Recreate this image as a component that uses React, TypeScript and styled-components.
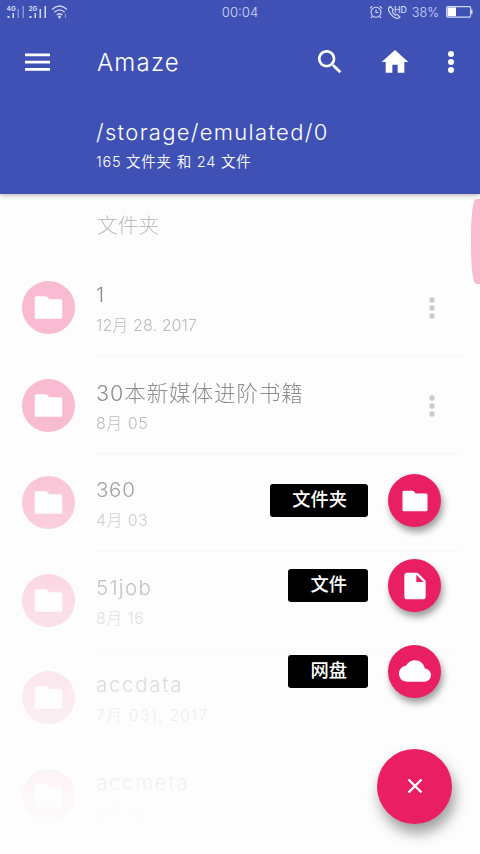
import React from "react";
import styled, { createGlobalStyle, css } from "styled-components";

const Global = createGlobalStyle`
  * { box-sizing: border-box; }
  body { margin: 0; background: #fdfdfd; }
  svg { display: block; flex: none; }
`;

const Screen = styled.div`
  position: relative;
  width: 480px;
  height: 854px;
  overflow: hidden;
  display: flex;
  flex-direction: column;
  background: #fdfdfd;
  font-family: Inter, "Noto Sans CJK SC", sans-serif;
  font-weight: 300;
`;

const Header = styled.header`
  flex: none;
  height: 194px;
  background: #3f51b5;
  color: #fff;
  box-shadow: 0 1px 5px rgba(80, 50, 50, 0.4);
  z-index: 1;
`;

const StatusBar = styled.div`
  display: grid;
  grid-template-columns: 1fr auto 1fr;
  align-items: center;
  height: 24px;
  padding: 0 7px;
  color: #d3d9f5;
`;

const StatusGroup = styled.div<{ $end?: boolean }>`
  display: flex;
  align-items: center;
  justify-content: ${(p) => (p.$end ? "flex-end" : "flex-start")};
`;

type TextProps = { $size: number; $track?: number };
const textStyle = css<TextProps>`
  font-size: ${(p) => p.$size}px;
  letter-spacing: ${(p) => p.$track ?? 0}px;
  white-space: pre;
`;

const Label = styled.span<TextProps>`
  ${textStyle}
`;

const Toolbar = styled.div`
  display: flex;
  align-items: center;
  height: 76px;
  padding: 0 25px;
`;

const AppTitle = styled.h1<TextProps>`
  ${textStyle}
  flex: 1;
  margin: 0 0 0 47px;
  font-weight: 300;
`;

const Actions = styled.div`
  display: flex;
  align-items: center;
`;

const PathBlock = styled.div`
  padding: 17px 0 0 96px;
`;

const PathLine = styled.div<TextProps>`
  ${textStyle}
  line-height: 30px;
`;

const CountLine = styled.div<TextProps>`
  ${textStyle}
  font-weight: 350;
  line-height: 30px;
`;

const Content = styled.main`
  position: relative;
  flex: 1;
  display: flex;
  justify-content: space-between;
  overflow: hidden;
`;

const List = styled.div`
  flex: none;
  width: 461px;
  height: 660px;
  overflow: hidden;
  mask-image: linear-gradient(#000 34%, rgba(0, 0, 0, 0.78) 47%, rgba(0, 0, 0, 0.5) 61%, rgba(0, 0, 0, 0.27) 76%, rgba(0, 0, 0, 0.09) 91%, transparent 97%);
`;

const Section = styled.div<TextProps>`
  ${textStyle}
  height: 65px;
  padding-left: 97px;
  line-height: 64px;
  color: #bdbdbd;
`;

const Row = styled.div`
  display: flex;
  height: 97.5px;
  padding-left: 21.5px;
`;

const Avatar = styled.div`
  display: flex;
  align-items: center;
  justify-content: center;
  flex: none;
  width: 53px;
  height: 53px;
  margin: 22px 21.5px 0 0;
  border-radius: 50%;
  background: #f8bbd1;
`;

const RowBody = styled.div`
  display: flex;
  flex: 1;
  justify-content: space-between;
  border-bottom: 1px solid #f5f5f5;
`;

const RowText = styled.div`
  padding: 21px 0 0 0;
`;

const Name = styled.div<TextProps>`
  ${textStyle}
  line-height: 30px;
  color: #8c8c8c;
`;

const DateLine = styled.div<TextProps>`
  ${textStyle}
  line-height: 30px;
  color: #bcbcbc;
`;

const RowMenu = styled.div`
  padding: 37px 25px 0 0;
`;

const ScrollThumb = styled.div`
  width: 9.5px;
  height: 85px;
  margin-top: 5px;
  border-radius: 5px 0 0 5px / 36px 0 0 36px;
  background: #f8bbd1;
`;

const SpeedDial = styled.div`
  position: absolute;
  right: 28px;
  bottom: 30.5px;
  display: flex;
  flex-direction: column;
  align-items: flex-end;
`;

const DialItem = styled.div`
  display: flex;
  align-items: center;
  height: 53px;
  margin: 0 11px 32.3px 0;
`;

const DialLabel = styled.div`
  height: 33px;
  margin-right: 20px;
  padding: 0 21px 0 22.5px;
  border-radius: 3px;
  background: #000;
  color: #fff;
  font-size: 18.3px;
  font-weight: 500;
  line-height: 31px;
`;

const Fab = styled.button<{ $large?: boolean }>`
  display: flex;
  align-items: center;
  justify-content: center;
  flex: none;
  width: ${(p) => (p.$large ? 75 : 53)}px;
  height: ${(p) => (p.$large ? 75 : 53)}px;
  margin-top: ${(p) => (p.$large ? 18.5 : 0)}px;
  padding: 0;
  border: 0;
  border-radius: 50%;
  background: #e91e63;
  box-shadow: ${(p) =>
    p.$large ? "3px 9px 14px rgba(0, 0, 0, 0.38)" : "2px 5px 7px rgba(0, 0, 0, 0.38)"};
`;

const FolderIcon = ({ size }: { size: number }) => (
  <svg width={size} height={size} viewBox="0 0 24 24" fill="#fff">
    <path d="M9.500 3.800H3.200c-.7 0-1.200.5-1.200 1.200v14c0 .7.5 1.200 1.200 1.200h17.600c.7 0 1.200-.5 1.200-1.200V7.200c0-.7-.5-1.200-1.200-1.200H12.500l-1.200-1.500c-.4-.5-1-.7-1.800-.7z" />
  </svg>
);

const FileIcon = () => (
  <svg width="32" height="32" viewBox="0 0 24 24" fill="#fff">
    <path d="M6 2c-1.100 0-2 .9-2 2v16c0 1.100.9 2 2 2h12c1.100 0 2-.9 2-2V8l-6-6H6zm7 7V3.500L18.500 9H13z" />
  </svg>
);

const CloudIcon = () => (
  <svg width="32" height="32" viewBox="0 0 24 24" fill="#fff">
    <path d="M19.350 10.040C18.670 6.590 15.640 4 12 4 9.110 4 6.600 5.640 5.350 8.040 2.340 8.360 0 10.910 0 14c0 3.310 2.690 6 6 6h13c2.760 0 5-2.240 5-5 0-2.640-2.050-4.780-4.650-4.960z" />
  </svg>
);

const Dots = ({ color, r }: { color: string; r: number }) => (
  <svg width="8" height="24" viewBox="0 0 8 24" fill={color}>
    <circle cx="4" cy="4" r={r} />
    <circle cx="4" cy="12" r={r} />
    <circle cx="4" cy="20" r={r} />
  </svg>
);

const Signal = ({ label, dim }: { label: string; dim?: boolean }) => (
  <svg width="22" height="18" viewBox="0 0 22 18" fill="#d3d9f5">
    <text x="-0.500" y="7.500" fontSize="6.500" fontWeight="700" fontFamily="Inter, sans-serif">{label}</text>
    <rect x="0.500" y="13" width="2" height="2" />
    <rect x="5.500" y="10" width="1.500" height="5" />
    <rect x="10.500" y="6" width="1.500" height="9" opacity={dim ? 0.5 : 1} />
    <rect x="15.500" y="3" width="1.500" height="12" opacity={dim ? 0.5 : 1} />
  </svg>
);

const WifiIcon = () => (
  <svg width="18" height="16" viewBox="0 0 18 16" fill="none" stroke="#d3d9f5" strokeWidth="1.300">
    <path d="M1 5.500Q8.500-1.500 16 5.500M3.300 8.300Q8.500 3.500 13.700 8.300M5.700 11Q8.500 8.500 11.300 11" />
    <circle cx="8.500" cy="13" r="1.400" fill="#d3d9f5" stroke="none" />
    <path d="M14.500 10v4" opacity=".5" />
  </svg>
);

const AlarmIcon = () => (
  <svg width="14" height="14" viewBox="0 0 14 14" fill="none" stroke="#d3d9f5" strokeWidth="1.100">
    <circle cx="7" cy="7.300" r="5" />
    <path d="M7 4.500v3h2.500M1 3.300L3.300 1.200M13 3.300L10.700 1.200M3.300 11.300L2 13M10.700 11.300L12 13" />
  </svg>
);

const CallIcon = () => (
  <svg width="20" height="16" viewBox="0 0 20 16" fill="none" stroke="#d3d9f5" strokeWidth="1.100">
    <path d="M3.500 2.500L1.500 4C1 8 6 14.500 11 14.500L13 13 10 10.200 8.500 11.200C7 10.500 5.500 8.500 5.200 7.200L6.300 5.800 3.500 2.500z" />
    <text x="7" y="8.500" fill="#d3d9f5" stroke="none" fontSize="8.800" fontWeight="500" fontFamily="Inter, sans-serif">HD</text>
  </svg>
);

const BatteryIcon = () => (
  <svg width="27" height="12" viewBox="0 0 27 12">
    <rect x="0.600" y="0.600" width="24" height="10.500" rx="1" fill="none" stroke="#d3d9f5" strokeWidth="1.100" />
    <rect x="1.500" y="1.500" width="8.500" height="8.700" fill="#fff" />
    <rect x="25" y="3.500" width="1.500" height="4.500" fill="#d3d9f5" />
  </svg>
);

const StatusIcon = styled.span<{ $gap: number }>`
  display: flex;
  margin-right: ${(p) => p.$gap}px;
`;

const Action = styled.span<{ $gap: number }>`
  display: flex;
  margin-left: ${(p) => p.$gap}px;
`;

type Entry = { name: string; date: string; size?: number; nameTrack: number; dateTrack: number; menu?: boolean };
const entries: Entry[] = [
  { name: "1", date: "12月 28. 2017", nameTrack: 0, dateTrack: 0.1, menu: true },
  { name: "30本新媒体进阶书籍", date: "8月 05", size: 21.5, nameTrack: 0.95, dateTrack: 0.5, menu: true },
  { name: "360", date: "4月 03", nameTrack: 0.7, dateTrack: 0.4 },
  { name: "51job", date: "8月 16", nameTrack: 1.3, dateTrack: 0.4 },
  { name: "accdata", date: "7月 031, 2017", nameTrack: 1.7, dateTrack: 1.1 },
  { name: "accmeta", date: "8月 16", nameTrack: 1.7, dateTrack: 0.4 },
];

export default function App() {
  return (
    <>
      <Global />
      <Screen>
        <Header>
          <StatusBar>
            <StatusGroup>
              <Signal label="4G" dim />
              <Signal label="2G" />
              <WifiIcon />
            </StatusGroup>
            <Label $size={13.2}>00:04</Label>
            <StatusGroup $end>
              <StatusIcon $gap={4}><AlarmIcon /></StatusIcon>
              <StatusIcon $gap={5}><CallIcon /></StatusIcon>
              <StatusIcon $gap={7}><Label $size={12.6}>38%</Label></StatusIcon>
              <BatteryIcon />
            </StatusGroup>
          </StatusBar>
          <Toolbar>
            <svg width="25" height="20" viewBox="0 0 25 20" fill="#fff">
              <path d="M0 1.500h25v2.700H0zM0 8.700h25v2.700H0zM0 16h25v2.700H0z" />
            </svg>
            <AppTitle $size={24} $track={1.2}>Amaze</AppTitle>
            <Actions>
              <svg width="32" height="32" viewBox="0 0 24 24" fill="#fff">
                <path d="M15.500 14h-.79l-.28-.27C15.410 12.590 16 11.110 16 9.500 16 5.910 13.090 3 9.500 3S3 5.910 3 9.500 5.910 16 9.500 16c1.610 0 3.090-.59 4.230-1.570l.27.28v.79l5 4.990L20.490 19l-4.990-5zm-6 0C7.010 14 5 11.990 5 9.500S7.010 5 9.500 5 14 7.010 14 9.500 11.990 14 9.500 14z" />
              </svg>
              <Action $gap={33}>
                <svg width="32" height="32" viewBox="0 0 24 24" fill="#fff">
                  <path d="M10 20v-6h4v6h5v-8h3L12 3 2 12h3v8z" />
                </svg>
              </Action>
              <Action $gap={36}><Dots color="#fff" r={3} /></Action>
            </Actions>
          </Toolbar>
          <PathBlock>
            <PathLine $size={22} $track={1.3}>/storage/emulated/0</PathLine>
            <CountLine $size={14.5} $track={0.75}>165 文件夹 和 24 文件</CountLine>
          </PathBlock>
        </Header>
        <Content>
          <List>
            <Section $size={20.8}>文件夹</Section>
            {entries.map((e) => (
              <Row key={e.name}>
                <Avatar><FolderIcon size={33} /></Avatar>
                <RowBody>
                  <RowText>
                    <Name $size={e.size ?? 20.5} $track={e.nameTrack}>{e.name}</Name>
                    <DateLine $size={16} $track={e.dateTrack}>{e.date}</DateLine>
                  </RowText>
                  {e.menu && <RowMenu><Dots color="#cacaca" r={2.7} /></RowMenu>}
                </RowBody>
              </Row>
            ))}
          </List>
          <ScrollThumb />
        </Content>
        <SpeedDial>
          <DialItem><DialLabel>文件夹</DialLabel><Fab><FolderIcon size={30} /></Fab></DialItem>
          <DialItem><DialLabel>文件</DialLabel><Fab><FileIcon /></Fab></DialItem>
          <DialItem><DialLabel>网盘</DialLabel><Fab><CloudIcon /></Fab></DialItem>
          <Fab $large>
            <svg width="16" height="16" viewBox="0 0 16 16" stroke="#fff" strokeWidth="2.400">
              <path d="M1.500 1.500l13 13M14.500 1.500l-13 13" />
            </svg>
          </Fab>
        </SpeedDial>
      </Screen>
    </>
  );
}
